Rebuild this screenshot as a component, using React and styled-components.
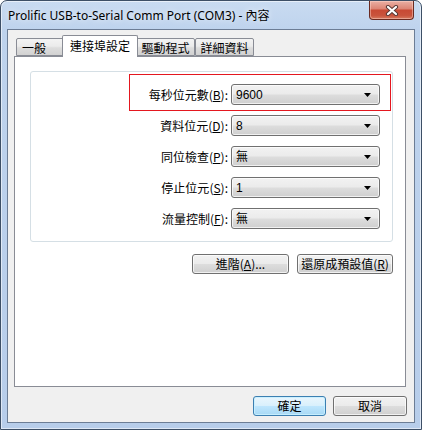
import React from 'react';
import styled, { createGlobalStyle } from 'styled-components';

const GlobalStyle = createGlobalStyle`
  html, body { margin: 0; padding: 0; background: #fff; }
  body { font-family: "Noto Sans CJK TC", "Noto Sans", sans-serif; font-size: 12px; }
  * { box-sizing: border-box; }
`;

const Window = styled.div`
  width: 422px;
  height: 430px;
  border: 1px solid #3d4f66;
  border-radius: 7px 7px 0 0;
  background: linear-gradient(180deg, #c9dbf1 0px, #bed3ed 30px, #b7cdea 100%);
  box-shadow: inset 0 0 0 1px rgba(255, 255, 255, 0.55);
  padding: 0 6px 6px;
  display: flex;
  flex-direction: column;
  overflow: hidden;
`;

const TitleBar = styled.div`
  height: 28px;
  display: flex;
  align-items: center;
  padding-left: 1px;
`;

const TitleText = styled.span`
  font-family: "Noto Sans", "Noto Sans CJK TC", sans-serif;
  font-size: 12px;
  color: #000;
  line-height: 1;
  margin-top: 2px;
  text-shadow: 0 0 6px rgba(255, 255, 255, 0.9);
`;

const CloseButton = styled.div`
  margin-left: auto;
  margin-right: 1px;
  align-self: flex-start;
  width: 45px;
  height: 19px;
  border: 1px solid #6a2a20;
  border-top: none;
  border-radius: 0 0 4px 4px;
  background: linear-gradient(180deg, #eab0a4 0%, #dd8676 42%, #c84a34 52%, #c9533c 80%, #d67a5f 100%);
  box-shadow: inset 0 0 0 1px rgba(255, 220, 210, 0.45);
  display: flex;
  align-items: center;
  justify-content: center;
`;

const Client = styled.div`
  flex: 1;
  border: 1px solid #6c7d95;
  background: #f0f0f0;
  display: flex;
  flex-direction: column;
  padding: 5px 8px 6px 6px;
`;

const TabStrip = styled.div`
  display: flex;
  align-items: flex-end;
  height: 21px;
  padding-left: 2px;
  position: relative;
  z-index: 1;
`;

const Tab = styled.div`
  position: relative;
  width: ${(p) => p.$w}px;
  height: ${(p) => (p.$active ? 22 : 18)}px;
  margin: ${(p) => (p.$active ? '0 -2px -1px' : '0')};
  z-index: ${(p) => (p.$active ? 2 : 1)};
  border: 1px solid #898c95;
  border-bottom: ${(p) => (p.$active ? 'none' : '1px solid #898c95')};
  border-radius: 2px 2px 0 0;
  background: ${(p) =>
    p.$active
      ? '#ffffff'
      : 'linear-gradient(180deg, #f3f3f3 0%, #ebebeb 45%, #dddddd 55%, #d2d2d2 100%)'};
  display: flex;
  align-items: center;
  justify-content: ${(p) => (p.$left ? 'flex-start' : 'center')};
  padding: ${(p) => (p.$active ? '0 0 2px' : '2px 0 0')};
  padding-left: ${(p) => (p.$left ? '5px' : '0')};
  font-size: 12px;
  line-height: 1;
  color: #000;
  white-space: nowrap;
`;

const Panel = styled.div`
  flex: 1;
  border: 1px solid #898c95;
  background: #fff;
  padding: 14px 12px 0 15px;
  display: flex;
  flex-direction: column;
`;

const Group = styled.div`
  position: relative;
  border: 1px solid #d5dfe5;
  border-radius: 3px;
  padding: 12px 12px;
  display: flex;
  flex-direction: column;
  gap: 10px;
`;

const Highlight = styled.div`
  position: absolute;
  left: 98px;
  right: 1px;
  top: 2px;
  height: 37px;
  border: 1px solid #e4171f;
  pointer-events: none;
`;

const Row = styled.div`
  display: flex;
  justify-content: flex-end;
  align-items: center;
  gap: 3px;
  height: 21px;
`;

const Label = styled.span`
  font-size: 12px;
  line-height: 1;
  color: #000;
  white-space: nowrap;
`;

const Select = styled.div`
  width: 149px;
  height: 21px;
  border: 1px solid #707070;
  border-radius: 3px;
  background: linear-gradient(180deg, #f2f2f2 0%, #ebebeb 48%, #dddddd 52%, #cfcfcf 100%);
  box-shadow: inset 0 0 0 1px rgba(255, 255, 255, 0.7);
  display: flex;
  align-items: center;
  justify-content: space-between;
  padding: 0 7px 0 4px;
`;

const SelectValue = styled.span`
  font-family: "Liberation Sans", "Noto Sans CJK TC", sans-serif;
  font-size: 12px;
  line-height: 1;
  color: #000;
`;

const ButtonRow = styled.div`
  display: flex;
  justify-content: flex-end;
  gap: 8px;
  margin-top: 12px;
`;

const Button = styled.div`
  width: ${(p) => p.$w}px;
  height: 20px;
  border: 1px solid ${(p) => (p.$primary ? '#3c7fb1' : '#707070')};
  border-radius: 3px;
  background: ${(p) =>
    p.$primary
      ? 'linear-gradient(180deg, #eaf6fd 0%, #d9f0fc 48%, #bee6fd 52%, #a7d9f5 100%)'
      : 'linear-gradient(180deg, #f2f2f2 0%, #ebebeb 48%, #dddddd 52%, #cfcfcf 100%)'};
  box-shadow: inset 0 0 0 1px ${(p) => (p.$primary ? 'rgba(200, 240, 255, 0.9)' : 'rgba(255, 255, 255, 0.7)')};
  display: flex;
  align-items: center;
  justify-content: center;
  font-size: 12px;
  line-height: 1;
  color: #000;
  white-space: nowrap;
`;

const BottomBar = styled.div`
  display: flex;
  justify-content: flex-end;
  gap: 7px;
  margin-top: 9px;
  margin-right: -1px;
`;

const Arrow = () => (
  <svg width="8" height="4" viewBox="0 0 8 4">
    <path d="M0 0 H7 L3.5 4 Z" fill="#000" />
  </svg>
);

const CloseX = () => (
  <svg width="14" height="11" viewBox="0 0 14 11">
    <path d="M3 2 L11 9 M11 2 L3 9" stroke="#5a3a36" strokeWidth="4.2" strokeLinecap="round" />
    <path d="M3 2 L11 9 M11 2 L3 9" stroke="#ffffff" strokeWidth="2.2" strokeLinecap="round" />
  </svg>
);

const rows = [
  { label: '每秒位元數', key: 'B', value: '9600' },
  { label: '資料位元', key: 'D', value: '8' },
  { label: '同位檢查', key: 'P', value: '無' },
  { label: '停止位元', key: 'S', value: '1' },
  { label: '流量控制', key: 'F', value: '無' },
];

export default function App() {
  return (
    <>
      <GlobalStyle />
      <Window>
        <TitleBar>
          <TitleText>Prolific USB-to-Serial Comm Port (COM3) - 內容</TitleText>
          <CloseButton>
            <CloseX />
          </CloseButton>
        </TitleBar>
        <Client>
          <TabStrip>
            <Tab $w={48} $left>一般</Tab>
            <Tab $w={76} $active>連接埠設定</Tab>
            <Tab $w={59}>驅動程式</Tab>
            <Tab $w={59}>詳細資料</Tab>
          </TabStrip>
          <Panel>
            <Group>
              <Highlight />
              {rows.map((r) => (
                <Row key={r.key}>
                  <Label>
                    {r.label}(<u>{r.key}</u>):
                  </Label>
                  <Select>
                    <SelectValue>{r.value}</SelectValue>
                    <Arrow />
                  </Select>
                </Row>
              ))}
            </Group>
            <ButtonRow>
              <Button $w={97}>
                進階(<u>A</u>)...
              </Button>
              <Button $w={96}>
                還原成預設值(<u>R</u>)
              </Button>
            </ButtonRow>
          </Panel>
          <BottomBar>
            <Button $w={73} $primary>確定</Button>
            <Button $w={74}>取消</Button>
          </BottomBar>
        </Client>
      </Window>
    </>
  );
}
